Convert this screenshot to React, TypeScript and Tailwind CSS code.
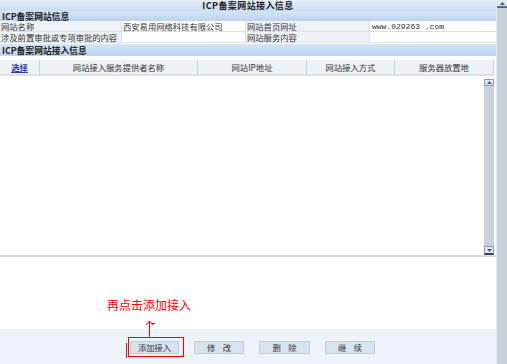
import React from "react";

const F = { fontFamily: '"Noto Sans CJK SC", "DejaVu Sans", sans-serif' } as React.CSSProperties;

export default function App() {
  return (
    <div className="relative flex w-[507px] h-[364px] bg-white overflow-hidden text-[#333]" style={F}>
      <div className="flex flex-col w-[496px] h-full">
        {/* title */}
        <div className="h-[11px] flex items-center justify-center bg-gradient-to-b from-[#e8f0fa] to-[#c8dcf2] text-[9px] font-bold text-[#222] leading-[10px] tracking-[0.4px]">
          ICP备案网站接入信息
        </div>
        {/* section 1 */}
        <div className="h-[10px] flex items-center pl-[2px] bg-gradient-to-b from-[#d4e4f6] to-[#bcd4f0] text-[8.8px] font-bold text-[#222] leading-[9px]">
          ICP备案网站信息
        </div>
        <div className="flex h-[11px] text-[8.3px] leading-[9px] border-b border-[#d8e0ea]">
          <div className="w-[122px] flex items-center pl-[1px] bg-[#eef2f7] border-r border-[#d8e0ea]">网站名称</div>
          <div className="w-[124px] flex items-center pl-[1px] bg-white border-r border-[#d8e0ea]">西安易用网络科技有限公司</div>
          <div className="w-[124px] flex items-center pl-[1px] bg-[#eef2f7] border-r border-[#d8e0ea]">网站首页网址</div>
          <div className="flex-1 flex items-center pl-[2px] bg-white text-[8px]" style={{ fontFamily: '"Liberation Mono", monospace' }}>www.029263 .com</div>
        </div>
        <div className="flex h-[11px] text-[8.3px] leading-[9px] border-b border-[#d8e0ea]">
          <div className="w-[122px] flex items-center pl-[1px] bg-[#eef2f7] border-r border-[#d8e0ea]">涉及前置审批或专项审批的内容</div>
          <div className="w-[124px] bg-white border-r border-[#d8e0ea]"></div>
          <div className="w-[124px] flex items-center pl-[1px] bg-[#eef2f7] border-r border-[#d8e0ea]">网站服务内容</div>
          <div className="flex-1 bg-white"></div>
        </div>
        {/* section 2 */}
        <div className="mt-[1px] h-[12px] flex items-center pl-[2px] bg-gradient-to-b from-[#d4e4f6] to-[#bcd4f0] text-[8.8px] font-bold text-[#222] leading-[9px]">
          ICP备案网站接入信息
        </div>
        <div className="h-[4px]"></div>
        {/* column headers */}
        <div className="flex h-[16px] text-[8.3px] leading-[9px] bg-[#eef1f5] border-b-2 border-[#dde1e7] mr-[2px]">
          <div className="w-[40px] flex items-center justify-center border-r border-[#c8d0da]">
            <span className="text-[#2a3aa8] underline font-bold">选择</span>
          </div>
          <div className="w-[158px] flex items-center justify-center border-r border-[#c8d0da]">网站接入服务提供者名称</div>
          <div className="w-[109px] flex items-center justify-center border-r border-[#c8d0da]">网站IP地址</div>
          <div className="w-[88px] flex items-center justify-center border-r border-[#c8d0da]">网站接入方式</div>
          <div className="flex-1 flex items-center justify-center border-r border-[#c8d0da]">服务器放置地</div>
        </div>
        {/* list area */}
        <div className="flex h-[179px]">
          <div className="flex-1 bg-white"></div>
          <div className="w-[10px] mr-[2px] mt-[3px] flex flex-col bg-[#c9d1db]">
            <div className="h-[7px] bg-[#dfe8f4] border border-[#8a9ab0] flex items-center justify-center">
              <svg width="5" height="3" viewBox="0 0 5 3"><path d="M0 3 L2.5 0 L5 3 Z" fill="#4a5a70" /></svg>
            </div>
            <div className="flex-1"></div>
            <div className="h-[9px] bg-[#dfe8f4] border border-[#8a9ab0] border-b-2 border-b-[#34445a] flex items-center justify-center">
              <svg width="5" height="3" viewBox="0 0 5 3"><path d="M0 0 L2.5 3 L5 0 Z" fill="#4a5a70" /></svg>
            </div>
          </div>
        </div>
        <div className="h-[2px] bg-[#dadde3]"></div>
        <div className="h-[72px] bg-white"></div>
        {/* footer */}
        <div className="flex-1 bg-[#eef3fb] flex items-start pt-[12px] pl-[130px] gap-[15px] text-[8.3px] leading-none text-[#333]">
          <div className="w-[49px] h-[13px] flex items-center justify-center bg-[#d9e3ee] border border-[#c0ccd8]">添加接入</div>
          <div className="w-[50px] h-[13px] flex items-center justify-center bg-[#d9e3ee] border border-[#c0ccd8]">修&nbsp;&nbsp;&nbsp;&nbsp;改</div>
          <div className="w-[51px] h-[13px] flex items-center justify-center bg-[#d9e3ee] border border-[#c0ccd8]">删&nbsp;&nbsp;&nbsp;&nbsp;除</div>
          <div className="w-[50px] h-[13px] flex items-center justify-center bg-[#d9e3ee] border border-[#c0ccd8]">继&nbsp;&nbsp;&nbsp;&nbsp;续</div>
        </div>
      </div>
      {/* outer scrollbar */}
      <div className="w-[11px] h-full flex flex-col bg-[#c8d0da] border-l border-[#e8ecf2]">
        <div className="h-[8px] bg-[#dfe8f4] flex items-center justify-center border-b-2 border-[#5a6a80]">
          <svg width="5" height="3" viewBox="0 0 5 3"><path d="M0 3 L2.5 0 L5 3 Z" fill="#4a5a70" /></svg>
        </div>
        <div className="flex-1"></div>
      </div>

      {/* red annotation overlay */}
      <div className="absolute left-[107px] top-[299px] text-[12px] leading-none text-[#ff0000] whitespace-nowrap" style={{ fontFamily: '"Noto Sans CJK SC", sans-serif' }}>
        再点击添加接入
      </div>
      <svg className="absolute left-0 top-0" width="507" height="364" viewBox="0 0 507 364">
        <path d="M149.5 321 V337" stroke="#ff0000" strokeWidth="1" fill="none" />
        <path d="M146 325 L149.5 321 L153 325" stroke="#ff0000" strokeWidth="1" fill="none" />
        <path d="M152 323.5 H155" stroke="#ff0000" strokeWidth="1" />
        <rect x="128.5" y="337.5" width="55" height="19" stroke="#ff0000" strokeWidth="1" fill="none" />
        <path d="M126.5 343 V358" stroke="#ff0000" strokeWidth="1" />
      </svg>
    </div>
  );
}
